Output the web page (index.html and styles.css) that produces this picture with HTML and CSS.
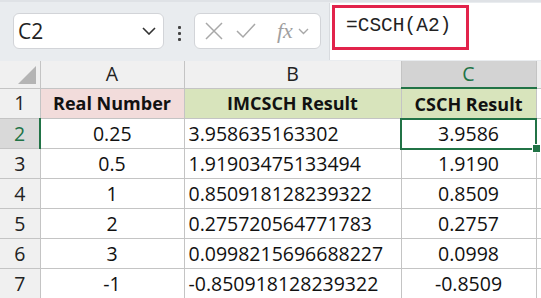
FILE: index.html
```html
<!DOCTYPE html>
<html lang="en">
<head>
  <meta charset="UTF-8">
  <title>CSCH Sheet</title>
  <link rel="stylesheet" href="styles.css">
</head>
<body>
  <!-- Formula bar -->
  <div class="topbar">
    <div class="name-box">
      <span>C2</span>
      <svg class="chev" width="14" height="8" viewBox="0 0 14 8"><path d="M1 1 L7 7 L13 1" fill="none" stroke="#333" stroke-width="1.6"/></svg>
    </div>
    <div class="dots"><i></i><i></i><i></i></div>
    <div class="func-box">
      <svg width="18" height="18" viewBox="0 0 18 18"><path d="M1 1 L17 17 M17 1 L1 17" stroke="#a8a8a8" stroke-width="1.5"/></svg>
      <svg width="20" height="16" viewBox="0 0 20 16"><path d="M1 8 L7 14 L19 1" fill="none" stroke="#a8a8a8" stroke-width="1.5"/></svg>
      <span class="fx">fx</span>
      <svg width="11" height="7" viewBox="0 0 11 7"><path d="M1 1 L5.5 5.5 L10 1" fill="none" stroke="#a8a8a8" stroke-width="1.4"/></svg>
    </div>
    <div class="formula">
      <div class="formula-text">=CSCH(A2)</div>
    </div>
  </div>

  <table class="sheet">
    <colgroup>
      <col class="c-row">
      <col class="c-a">
      <col class="c-b">
      <col class="c-c">
      <col>
    </colgroup>
    <thead>
      <tr>
        <th class="corner"><span class="tri"></span></th>
        <th>A</th>
        <th>B</th>
        <th class="active-col">C</th>
        <th></th>
      </tr>
    </thead>
    <tbody>
      <tr>
        <th>1</th>
        <td class="head pink">Real Number</td>
        <td class="head green">IMCSCH Result</td>
        <td class="head green">CSCH Result</td>
        <td></td>
      </tr>
      <tr>
        <th class="active-row">2</th>
        <td class="mid">0.25</td>
        <td>3.958635163302</td>
        <td class="mid selected">3.9586<span class="handle"></span></td>
        <td></td>
      </tr>
      <tr>
        <th>3</th>
        <td class="mid">0.5</td>
        <td>1.91903475133494</td>
        <td class="mid">1.9190</td>
        <td></td>
      </tr>
      <tr>
        <th>4</th>
        <td class="mid">1</td>
        <td>0.850918128239322</td>
        <td class="mid">0.8509</td>
        <td></td>
      </tr>
      <tr>
        <th>5</th>
        <td class="mid">2</td>
        <td>0.275720564771783</td>
        <td class="mid">0.2757</td>
        <td></td>
      </tr>
      <tr>
        <th>6</th>
        <td class="mid">3</td>
        <td>0.0998215696688227</td>
        <td class="mid">0.0998</td>
        <td></td>
      </tr>
      <tr>
        <th>7</th>
        <td class="mid">-1</td>
        <td>-0.850918128239322</td>
        <td class="mid">-0.8509</td>
        <td></td>
      </tr>
    </tbody>
  </table>
</body>
</html>
```

FILE: styles.css
```css
/* General styles */
body {
  margin: 0;
  padding: 0;
  width: 541px;
  height: 298px;
  overflow: hidden;
  background-color: #ffffff;
  font-family: "Open Sans", Arial, sans-serif;
}

/* Formula bar */
.topbar {
  display: flex;
  align-items: flex-start;
  height: 61px;
  background-color: #e9ecef;
  border-top: 2px solid #dfe2e6;
  box-sizing: border-box;
}
.name-box {
  display: flex;
  align-items: center;
  justify-content: space-between;
  box-sizing: border-box;
  width: 151px;
  height: 36px;
  margin: 11px 0 0 13px;
  padding: 0 7px 0 4px;
  background-color: white;
  border: 1px solid #d2d4d8;
  border-radius: 6px;
  font-size: 21px;
  color: #222;
}
.dots {
  display: flex;
  flex-direction: column;
  gap: 3px;
  margin: 24px 13px 0 14px;
}
.dots i {
  display: block;
  width: 3px;
  height: 3px;
  background-color: #444;
  border-radius: 1px;
}
.func-box {
  display: flex;
  align-items: center;
  box-sizing: border-box;
  width: 127px;
  height: 36px;
  margin-top: 11px;
  padding-left: 10px;
  gap: 13px;
  background-color: white;
  border: 1px solid #d2d4d8;
  border-radius: 6px;
}
.fx {
  font-family: "Liberation Serif", serif;
  font-style: italic;
  font-size: 22px;
  color: #a0a0a0;
  margin-left: 8px;
  margin-right: -8px;
}
.formula {
  flex: 1;
  height: 57px;
  margin: 1px 0 0 8px;
  background-color: white;
  border-left: 1px solid #d8dbdf;
}
.formula-text {
  box-sizing: border-box;
  width: 137px;
  height: 45px;
  margin: 2px 0 0 2px;
  padding: 7px 0 0 11px;
  border: 3px solid #e2234b;
  font-family: "Liberation Mono", monospace;
  font-size: 19.5px;
  color: #222;
}

/* Sheet grid */
.sheet {
  border-collapse: collapse;
  table-layout: fixed;
  width: 560px;
  font-size: 19.5px;
  color: #111;
}
.c-row { width: 40px; }
.c-a { width: 144px; }
.c-b { width: 217px; }
.c-c { width: 135px; }

.sheet th, .sheet td {
  border: 1px solid #c4c4c4;
  padding: 0 4px;
  height: 29px;
  line-height: 28px;
  white-space: nowrap;
  overflow: hidden;
  font-weight: normal;
}
.sheet thead th {
  height: 26px;
  line-height: 26px;
  background-color: #f0f0f0;
  text-align: center;
  border-top: none;
  color: #222;
}
.sheet tbody th {
  background-color: #f0f0f0;
  text-align: center;
  color: #222;
}
.sheet th:first-child {
  border-left: none;
}
.corner {
  position: relative;
}
.tri {
  position: absolute;
  right: 4px;
  bottom: 4px;
  width: 0;
  height: 0;
  border-left: 18px solid transparent;
  border-bottom: 18px solid #b4b4b4;
}
.sheet thead th.active-col {
  background-color: #d3d3d3;
  color: #217346;
  border-bottom: 2px solid #217346;
}
.sheet tbody th.active-row {
  background-color: #d9d9d9;
  color: #217346;
  border-right: 2px solid #217346;
}
.sheet td.head {
  font-weight: bold;
  font-size: 18px;
  text-align: center;
}
.pink { background-color: #f2dcdb; }
.green { background-color: #d8e4bc; }
.mid { text-align: center; }

.selected {
  position: relative;
  outline: 2px solid #217346;
  outline-offset: -1px;
  overflow: visible !important;
}
.handle {
  position: absolute;
  right: -5px;
  bottom: -5px;
  width: 7px;
  height: 7px;
  background-color: #217346;
  border: 1px solid white;
}
```
